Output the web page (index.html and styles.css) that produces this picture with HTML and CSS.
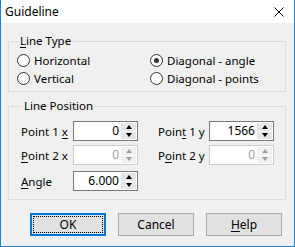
FILE: index.html
```html
<!DOCTYPE html>
<html lang="en">
<head>
  <meta charset="UTF-8">
  <title>Guideline</title>
  <link rel="stylesheet" href="styles.css">
</head>
<body>
  <div class="window">
    <div class="titlebar">
      <span class="title">Guideline</span>
      <svg class="close" width="10" height="10" viewBox="0 0 10 10">
        <path d="M0.5 0.5 L9.5 9.5 M9.5 0.5 L0.5 9.5" stroke="#000" stroke-width="1" fill="none"/>
      </svg>
    </div>

    <div class="content">
      <fieldset class="group type-group">
        <legend><u>L</u>ine Type</legend>
        <div class="radio-grid">
          <label class="radio"><span class="circle"></span>Horizontal</label>
          <label class="radio"><span class="circle checked"></span>Diagonal - angle</label>
          <label class="radio"><span class="circle"></span>Vertical</label>
          <label class="radio"><span class="circle"></span>Diagonal - points</label>
        </div>
      </fieldset>

      <fieldset class="group pos-group">
        <legend>Line Position</legend>
        <div class="pos-row">
          <span class="field-label">Point 1 <u>x</u></span>
          <div class="spin">
            <span class="spin-value">0</span>
            <span class="spin-btns"><span class="spin-btn up"></span><span class="spin-btn down"></span></span>
          </div>
          <span class="field-label second">Poin<u>t</u> 1 y</span>
          <div class="spin">
            <span class="spin-value">1566</span>
            <span class="spin-btns"><span class="spin-btn up"></span><span class="spin-btn down"></span></span>
          </div>
        </div>
        <div class="pos-row">
          <span class="field-label"><u>P</u>oint 2 x</span>
          <div class="spin disabled">
            <span class="spin-value">0</span>
            <span class="spin-btns"><span class="spin-btn up"></span><span class="spin-btn down"></span></span>
          </div>
          <span class="field-label second">P<u>o</u>int 2 y</span>
          <div class="spin disabled">
            <span class="spin-value">0</span>
            <span class="spin-btns"><span class="spin-btn up"></span><span class="spin-btn down"></span></span>
          </div>
        </div>
        <div class="pos-row angle-row">
          <span class="field-label"><u>A</u>ngle</span>
          <div class="spin">
            <span class="spin-value">6.000</span>
            <span class="spin-btns"><span class="spin-btn up"></span><span class="spin-btn down"></span></span>
          </div>
        </div>
      </fieldset>

      <div class="buttons">
        <button class="btn default"><span class="focus">OK</span></button>
        <button class="btn">Cancel</button>
        <button class="btn"><u>H</u>elp</button>
      </div>
    </div>
  </div>
</body>
</html>
```

FILE: styles.css
```css
body {
  margin: 0;
  font-family: "Noto Sans", "Open Sans", sans-serif;
  font-size: 11.5px;
  color: #000;
}
u {
  text-decoration-thickness: 1px;
  text-underline-offset: 2px;
}
.window {
  width: 295px;
  height: 247px;
  box-sizing: border-box;
  border: 1px solid #1883d7;
  border-top: none;
  background: #f0f0f0;
}
.titlebar {
  height: 23px;
  background: #fff;
  display: flex;
  align-items: center;
  padding: 0 10px 0 4px;
}
.title {
  font-size: 12px;
  line-height: 16px;
}
.close {
  margin-left: auto;
}
.content {
  padding: 10px 8px 0 7px;
}
.group {
  margin: 0;
  border: 1px solid #dcdcdc;
  padding: 2px 8px 4px 8px;
}
.group legend {
  padding: 0 2px;
  margin-left: 1px;
  line-height: 16px;
}
.radio-grid {
  display: grid;
  grid-template-columns: 133px 1fr;
}
.radio {
  display: flex;
  align-items: center;
  height: 18px;
}
.circle {
  width: 11px;
  height: 11px;
  border: 1px solid #333;
  border-radius: 50%;
  background: #fff;
  margin-right: 4px;
  position: relative;
}
.circle.checked::after {
  content: "";
  position: absolute;
  left: 3px;
  top: 3px;
  width: 5px;
  height: 5px;
  border-radius: 50%;
  background: #333;
}
.pos-group {
  margin-top: 6px;
  padding: 7px 8px 8px 12px;
}
.pos-row {
  display: flex;
  align-items: center;
  height: 20px;
  margin-bottom: 4px;
}
.angle-row {
  margin-top: 6px;
  margin-bottom: 0;
}
.field-label {
  width: 52px;
}
.field-label.second {
  width: 51px;
  margin-left: 20px;
}
.spin {
  width: 65px;
  height: 20px;
  box-sizing: border-box;
  border: 1px solid #7a7a7a;
  background: #fff;
  display: flex;
}
.spin-value {
  flex: 1;
  text-align: right;
  padding-right: 2px;
  line-height: 18px;
  font-size: 12px;
}
.spin-btns {
  width: 15px;
  display: flex;
  flex-direction: column;
  gap: 1px;
  padding: 1px 1px 1px 0;
}
.spin-btn {
  flex: 1;
  background: #e5e5e5;
  display: flex;
  align-items: center;
  justify-content: center;
}
.spin-btn::before {
  content: "";
  border-left: 3.5px solid transparent;
  border-right: 3.5px solid transparent;
}
.spin-btn.up::before {
  border-bottom: 4px solid #000;
}
.spin-btn.down::before {
  border-top: 4px solid #000;
}
.spin.disabled {
  border-color: #cccccc;
}
.spin.disabled .spin-value {
  color: #a0a0a0;
}
.spin.disabled .spin-btn {
  background: #f0f0f0;
}
.spin.disabled .spin-btn.up::before {
  border-bottom-color: #a0a0a0;
}
.spin.disabled .spin-btn.down::before {
  border-top-color: #a0a0a0;
}
.buttons {
  display: flex;
  gap: 12px;
  margin: 13px 0 0 22px;
}
.btn {
  width: 76px;
  height: 23px;
  box-sizing: border-box;
  border: 1px solid #adadad;
  background: #e1e1e1;
  font: inherit;
  font-size: 12px;
  color: #000;
  padding: 0;
}
.btn.default {
  border: 2px solid #0078d7;
  padding: 1px;
  display: flex;
}
.btn .focus {
  flex: 1;
  border: 1px dotted #000;
  display: flex;
  align-items: center;
  justify-content: center;
}
```
